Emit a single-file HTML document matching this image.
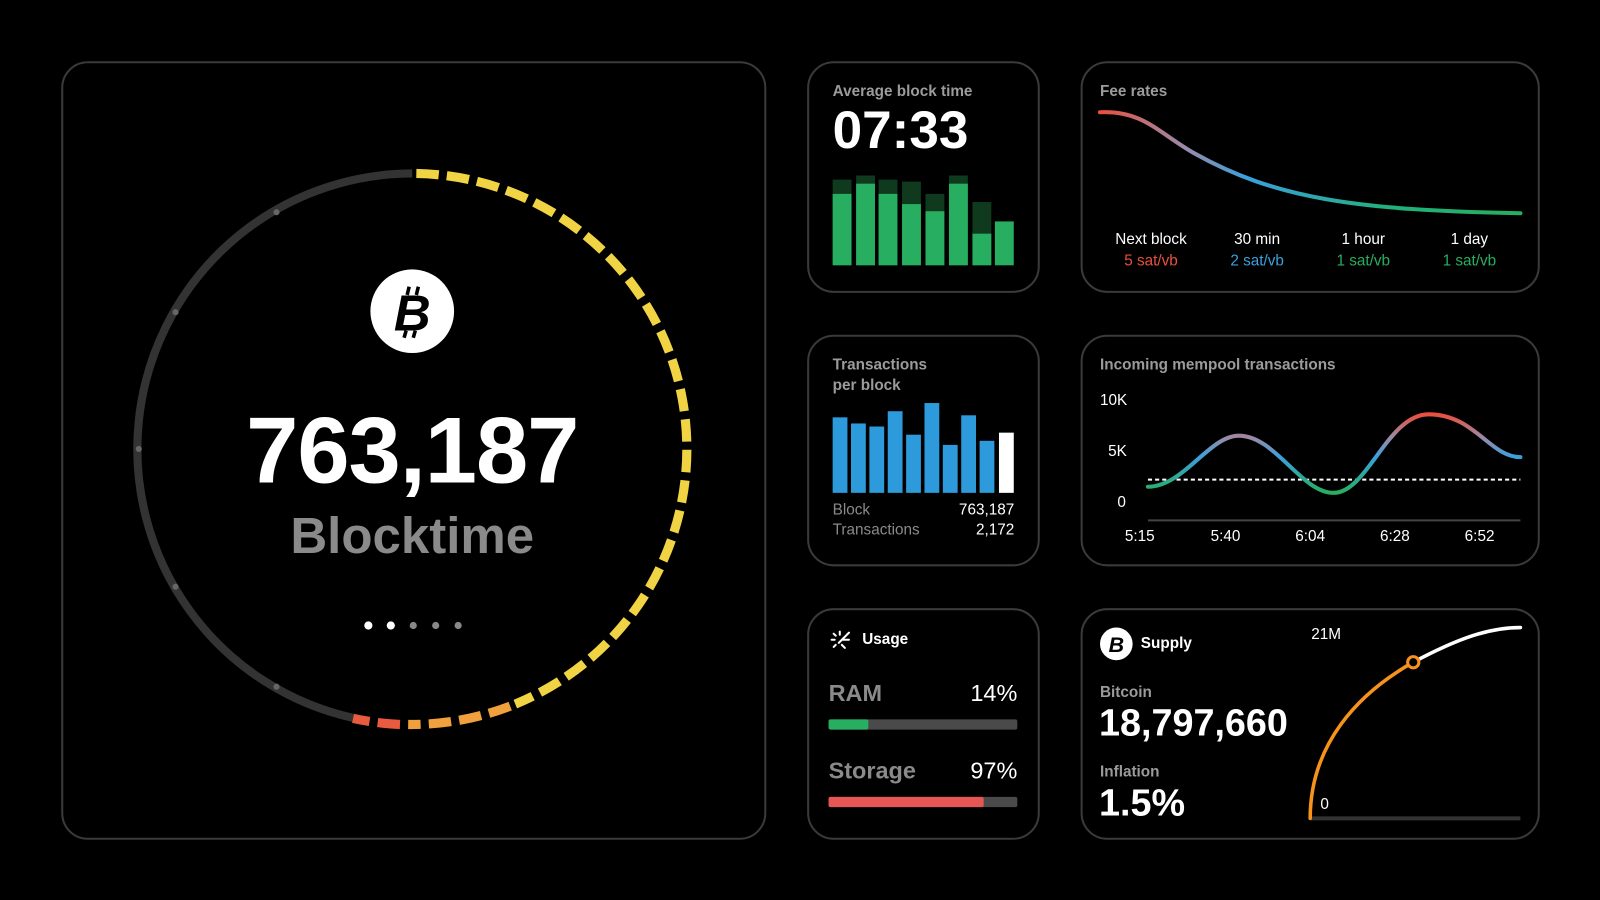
<!DOCTYPE html>
<html><head><meta charset="utf-8"><style>
html,body{margin:0;padding:0;background:#000;width:1600px;height:900px;overflow:hidden}
#w{position:absolute;left:0;top:0;width:1568px;height:882px;transform:scale(1.0204);transform-origin:0 0;font-family:"Liberation Sans",sans-serif;color:#fff}
.c{position:absolute;border:2px solid #3a3a3a;border-radius:26px;box-sizing:border-box}
.t{position:absolute;font-size:15px;font-weight:bold;color:#9b9b9b;line-height:20px}
.a{position:absolute;white-space:nowrap}
</style></head><body><div id="w">
<svg width="1568" height="882" style="position:absolute;left:0;top:0">
<defs>
<linearGradient id="fg" x1="1078" y1="0" x2="1490" y2="0" gradientUnits="userSpaceOnUse">
<stop offset="0" stop-color="#e9503e"/><stop offset="0.2" stop-color="#9a8aa8"/><stop offset="0.35" stop-color="#3aa0db"/><stop offset="0.7" stop-color="#22b07a"/><stop offset="1" stop-color="#27ae60"/></linearGradient>
<linearGradient id="mg" x1="0" y1="406" x2="0" y2="483" gradientUnits="userSpaceOnUse">
<stop offset="0" stop-color="#e9503e"/><stop offset="0.3" stop-color="#9a8aa8"/><stop offset="0.55" stop-color="#3aa0db"/><stop offset="1" stop-color="#27ae60"/></linearGradient>
</defs>
<path d="M348 704 A270 270 0 0 1 404 170" fill="none" stroke="#333" stroke-width="8"/>
<g fill="#666"><circle cx="271" cy="208" r="3"/><circle cx="172" cy="306" r="3"/><circle cx="136" cy="440" r="3"/><circle cx="172" cy="575" r="3"/><circle cx="271" cy="673" r="3"/></g>
<path d="M408 170 A270 270 0 0 1 505 690" fill="none" stroke="#f0d444" stroke-width="9" stroke-dasharray="22 8"/>
<path d="M500 692 A270 270 0 0 1 400 710" fill="none" stroke="#f0a03c" stroke-width="9" stroke-dasharray="22 8"/>
<path d="M392 710 A270 270 0 0 1 346 704" fill="none" stroke="#e95b3e" stroke-width="9" stroke-dasharray="22 8"/>
<circle cx="404" cy="305" r="41" fill="#fff"/>
<text x="404" y="324" text-anchor="middle" font-family="Liberation Sans" font-weight="bold" font-style="italic" font-size="50" fill="#000">B</text>
<g stroke="#000" stroke-width="3.5"><line x1="401" y1="281" x2="399" y2="289"/><line x1="410" y1="281" x2="408" y2="289"/><line x1="398" y1="324" x2="396" y2="331"/><line x1="407" y1="324" x2="405" y2="331"/></g>
<g fill="#fff"><circle cx="361" cy="613" r="4"/><circle cx="383" cy="613" r="4"/></g>
<g fill="#888"><circle cx="405" cy="613" r="3.5"/><circle cx="427" cy="613" r="3.5"/><circle cx="449" cy="613" r="3.5"/></g>
<g fill="#0f3a1e"><rect x="816" y="176" width="18.5" height="84"/><rect x="839" y="172" width="18.5" height="88"/><rect x="861" y="176" width="18.5" height="84"/><rect x="884" y="178" width="18.5" height="82"/><rect x="907" y="190" width="18.5" height="70"/><rect x="930" y="172" width="18.5" height="88"/><rect x="953" y="198" width="18.5" height="62"/></g>
<g fill="#27ae60"><rect x="816" y="190" width="18.5" height="70"/><rect x="839" y="180" width="18.5" height="80"/><rect x="861" y="190" width="18.5" height="70"/><rect x="884" y="200" width="18.5" height="60"/><rect x="907" y="207" width="18.5" height="53"/><rect x="930" y="180" width="18.5" height="80"/><rect x="953" y="229" width="18.5" height="31"/><rect x="975" y="217" width="18.5" height="43"/></g>
<path d="M1078 110 C1120 108 1135 130 1170 150 C1250 195 1330 206 1490 209" fill="none" stroke="url(#fg)" stroke-width="4" stroke-linecap="round"/>
<g fill="#2d9bdb"><rect x="816" y="409" width="14.5" height="74"/><rect x="834" y="415" width="14.5" height="68"/><rect x="852" y="418" width="14.5" height="65"/><rect x="870" y="403" width="14.5" height="80"/><rect x="888" y="426" width="14.5" height="57"/><rect x="906" y="395" width="14.5" height="88"/><rect x="924" y="436" width="14.5" height="47"/><rect x="942" y="407" width="14.5" height="76"/><rect x="960" y="432" width="14.5" height="51"/></g>
<rect x="979" y="424" width="14.5" height="59" fill="#fff"/>
<line x1="1125" y1="510" x2="1490" y2="510" stroke="#444" stroke-width="2"/>
<line x1="1125" y1="470" x2="1490" y2="470" stroke="#fff" stroke-width="2" stroke-dasharray="4 3"/>
<path d="M1125 477 C1160 477 1185 427 1214 427 C1250 427 1275 483 1307 483 C1340 483 1360 406 1400 406 C1445 406 1460 448 1490 448" fill="none" stroke="url(#mg)" stroke-width="4" stroke-linecap="round"/>
<rect x="812" y="705" width="185" height="10" rx="2" fill="#4a4a4a"/><rect x="812" y="705" width="39" height="10" rx="2" fill="#27ae60"/>
<rect x="812" y="781" width="185" height="10" rx="2" fill="#4a4a4a"/><rect x="812" y="781" width="152" height="10" rx="2" fill="#e85555"/>
<g stroke="#fff" stroke-width="2" stroke-linecap="round"><line x1="823" y1="619" x2="823" y2="622"/><line x1="815" y1="627" x2="818" y2="627"/><line x1="817" y1="621" x2="819" y2="623"/><line x1="817" y1="634" x2="819" y2="632"/><line x1="825" y1="632" x2="828" y2="635"/><line x1="822" y1="630" x2="832" y2="620"/><line x1="826" y1="627" x2="832" y2="627"/></g>
<line x1="1284" y1="802" x2="1490" y2="802" stroke="#333" stroke-width="4"/>
<path d="M1284 802 C1284 730 1330 680 1385 649" fill="none" stroke="#f7931a" stroke-width="3.5" stroke-linecap="round"/>
<path d="M1385 649 C1430 625 1460 615 1490 615" fill="none" stroke="#fff" stroke-width="3.5" stroke-linecap="round"/>
<circle cx="1385" cy="649" r="5.5" fill="#000" stroke="#f7931a" stroke-width="3"/>
<circle cx="1094" cy="631" r="16" fill="#fff"/>
<text x="1094" y="639" text-anchor="middle" font-family="Liberation Sans" font-weight="bold" font-style="italic" font-size="21" fill="#000">B</text>
</svg>
<div class="c" style="left:60px;top:60px;width:691px;height:763px"></div>
<div class="c" style="left:791px;top:60px;width:228px;height:227px"></div>
<div class="c" style="left:1059px;top:60px;width:450px;height:227px"></div>
<div class="c" style="left:791px;top:328px;width:228px;height:227px"></div>
<div class="c" style="left:1059px;top:328px;width:450px;height:227px"></div>
<div class="c" style="left:791px;top:596px;width:228px;height:227px"></div>
<div class="c" style="left:1059px;top:596px;width:450px;height:227px"></div>

<div class="a" style="left:0;width:808px;text-align:center;top:390px;font-size:92px;font-weight:bold;letter-spacing:-1px">763,187</div>
<div class="a" style="left:0;width:808px;text-align:center;top:496px;font-size:50px;font-weight:bold;color:#8a8a8a">Blocktime</div>

<div class="t" style="left:816px;top:80px">Average block time</div>
<div class="a" style="left:816px;top:98px;font-size:52px;font-weight:bold">07:33</div>

<div class="t" style="left:1078px;top:80px">Fee rates</div>
<div class="a" style="left:1078px;top:226px;width:100px;text-align:center;font-size:15px">Next block<br><span style="color:#e9503e;line-height:26px">5 sat/vb</span></div>
<div class="a" style="left:1182px;top:226px;width:100px;text-align:center;font-size:15px">30 min<br><span style="color:#3aa0db;line-height:26px">2 sat/vb</span></div>
<div class="a" style="left:1286px;top:226px;width:100px;text-align:center;font-size:15px">1 hour<br><span style="color:#27ae60;line-height:26px">1 sat/vb</span></div>
<div class="a" style="left:1390px;top:226px;width:100px;text-align:center;font-size:15px">1 day<br><span style="color:#27ae60;line-height:26px">1 sat/vb</span></div>

<div class="t" style="left:816px;top:348px">Transactions<br>per block</div>
<div class="a" style="left:816px;top:490px;font-size:15px;color:#8a8a8a;line-height:20px">Block<br>Transactions</div>
<div class="a" style="left:900px;width:94px;text-align:right;top:490px;font-size:15px;line-height:20px">763,187<br>2,172</div>

<div class="t" style="left:1078px;top:348px">Incoming mempool transactions</div>
<div class="a" style="left:1078px;top:384px;font-size:15px">10K</div>
<div class="a" style="left:1086px;top:434px;font-size:15px">5K</div>
<div class="a" style="left:1095px;top:484px;font-size:15px">0</div>
<div class="a" style="left:1097px;top:517px;font-size:15px;width:40px;text-align:center">5:15</div>
<div class="a" style="left:1181px;top:517px;font-size:15px;width:40px;text-align:center">5:40</div>
<div class="a" style="left:1264px;top:517px;font-size:15px;width:40px;text-align:center">6:04</div>
<div class="a" style="left:1347px;top:517px;font-size:15px;width:40px;text-align:center">6:28</div>
<div class="a" style="left:1430px;top:517px;font-size:15px;width:40px;text-align:center">6:52</div>

<div class="a" style="left:845px;top:618px;font-size:15px;font-weight:bold">Usage</div>
<div class="a" style="left:812px;top:666px;font-size:23px;font-weight:bold;color:#8a8a8a">RAM</div>
<div class="a" style="left:900px;width:97px;text-align:right;top:666px;font-size:23px">14%</div>
<div class="a" style="left:812px;top:742px;font-size:23px;font-weight:bold;color:#8a8a8a">Storage</div>
<div class="a" style="left:900px;width:97px;text-align:right;top:742px;font-size:23px">97%</div>

<div class="a" style="left:1118px;top:622px;font-size:15px;font-weight:bold">Supply</div>
<div class="a" style="left:1285px;top:613px;font-size:15px">21M</div>
<div class="t" style="left:1078px;top:669px">Bitcoin</div>
<div class="a" style="left:1077px;top:688px;font-size:37px;font-weight:bold">18,797,660</div>
<div class="t" style="left:1078px;top:747px">Inflation</div>
<div class="a" style="left:1077px;top:766px;font-size:37px;font-weight:bold">1.5%</div>
<div class="a" style="left:1294px;top:780px;font-size:15px">0</div>
</div></body></html>
